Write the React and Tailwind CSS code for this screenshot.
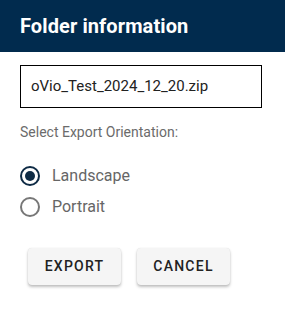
export default function App() {
  const font = { fontFamily: "Roboto, 'Liberation Sans', sans-serif" };
  return (
    <div className="w-[285px] h-[313px] bg-white" style={font}>
      <div className="h-[52px] bg-[#012b4e] flex items-center px-5">
        <span className="text-white text-[20px] font-bold leading-none tracking-[0.1px]">Folder information</span>
      </div>
      <div className="px-5 pt-[13px]">
        <div className="w-[242px] h-[43px] border border-black flex items-center px-[10px] text-[15px] text-[#222]">
          oVio_Test_2024_12_20.zip
        </div>
        <div className="mt-[16px] text-[14px] leading-[16px] text-[#6b6b6b]">Select Export Orientation:</div>
        <div className="mt-[26px] flex flex-col gap-[11px]">
          <div className="flex items-center h-[20px]">
            <div className="w-[20px] h-[20px] rounded-full border-2 border-[#0e2b45] flex items-center justify-center">
              <div className="w-[10px] h-[10px] rounded-full bg-[#0e2b45]" />
            </div>
            <span className="ml-[12px] text-[16px] text-[#666]">Landscape</span>
          </div>
          <div className="flex items-center h-[20px]">
            <div className="w-[20px] h-[20px] rounded-full border-2 border-[#777]" />
            <span className="ml-[12px] text-[16px] text-[#666]">Portrait</span>
          </div>
        </div>
        <div className="mt-[31px] ml-[8px] flex gap-[16px]">
          <button className="w-[93px] h-[37px] rounded-[4px] bg-[#f5f5f5] text-[14px] font-medium tracking-[1.25px] text-[#222] shadow-[0_2px_3px_rgba(0,0,0,0.25),0_0_1px_rgba(0,0,0,0.15)]">EXPORT</button>
          <button className="w-[93px] h-[37px] rounded-[4px] bg-[#f5f5f5] text-[14px] font-medium tracking-[1.25px] text-[#222] shadow-[0_2px_3px_rgba(0,0,0,0.25),0_0_1px_rgba(0,0,0,0.15)]">CANCEL</button>
        </div>
      </div>
    </div>
  );
}
